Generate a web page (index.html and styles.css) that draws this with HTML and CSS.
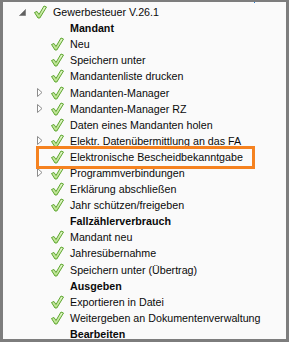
FILE: index.html
```html
<!DOCTYPE html>
<html>
<head lang="de">
    <meta charset="UTF-8">
    <title>Gewerbesteuer</title>
    <link rel="stylesheet" href="styles.css">
</head>
<body>
<svg width="0" height="0" class="defs">
    <defs>
        <linearGradient id="g" x1="0" y1="0" x2="0" y2="1">
            <stop offset="0" stop-color="#e6f7cf"/>
            <stop offset="1" stop-color="#b5df86"/>
        </linearGradient>
        <symbol id="chk" viewBox="0 0 14 14">
            <polygon points="1.5,7.5 4,6.5 6,9.5 11,1 13.5,2 6.8,13 5,13" fill="url(#g)" stroke="#5ca62e" stroke-width="1" stroke-linejoin="round"/>
        </symbol>
        <symbol id="closed" viewBox="0 0 6 9">
            <polygon points="0.5,0.5 5,4.5 0.5,8.5" fill="#fff" stroke="#8c8c8c" stroke-width="1"/>
        </symbol>
        <symbol id="open" viewBox="0 0 7 7">
            <polygon points="6.5,0.5 6.5,6.5 0.5,6.5" fill="#606060" stroke="#888" stroke-width="1"/>
        </symbol>
    </defs>
</svg>
<div id="frame">
    <span class="mark"></span>
    <ul class="tree">
        <li class="row"><span class="exp"><svg class="tri-open"><use href="#open"/></svg></span><span class="chk"><svg><use href="#chk"/></svg></span><span class="label">Gewerbesteuer V.26.1</span></li>
        <li class="row sub"><span class="exp"></span><span class="chk"></span><span class="label head">Mandant</span></li>
        <li class="row sub"><span class="exp"></span><span class="chk"><svg><use href="#chk"/></svg></span><span class="label">Neu</span></li>
        <li class="row sub"><span class="exp"></span><span class="chk"><svg><use href="#chk"/></svg></span><span class="label">Speichern unter</span></li>
        <li class="row sub"><span class="exp"></span><span class="chk"><svg><use href="#chk"/></svg></span><span class="label">Mandantenliste drucken</span></li>
        <li class="row sub"><span class="exp"><svg class="tri"><use href="#closed"/></svg></span><span class="chk"><svg><use href="#chk"/></svg></span><span class="label">Mandanten-Manager</span></li>
        <li class="row sub"><span class="exp"><svg class="tri"><use href="#closed"/></svg></span><span class="chk"><svg><use href="#chk"/></svg></span><span class="label">Mandanten-Manager RZ</span></li>
        <li class="row sub"><span class="exp"></span><span class="chk"><svg><use href="#chk"/></svg></span><span class="label">Daten eines Mandanten holen</span></li>
        <li class="row sub"><span class="exp"><svg class="tri"><use href="#closed"/></svg></span><span class="chk"><svg><use href="#chk"/></svg></span><span class="label">Elektr. Datenübermittlung an das FA</span></li>
        <li class="row sub marked"><span class="exp"></span><span class="chk"><svg><use href="#chk"/></svg></span><span class="label">Elektronische Bescheidbekanntgabe</span></li>
        <li class="row sub"><span class="exp"><svg class="tri"><use href="#closed"/></svg></span><span class="chk"><svg><use href="#chk"/></svg></span><span class="label">Programmverbindungen</span></li>
        <li class="row sub"><span class="exp"></span><span class="chk"><svg><use href="#chk"/></svg></span><span class="label">Erklärung abschließen</span></li>
        <li class="row sub"><span class="exp"></span><span class="chk"><svg><use href="#chk"/></svg></span><span class="label">Jahr schützen/freigeben</span></li>
        <li class="row sub"><span class="exp"></span><span class="chk"></span><span class="label head">Fallzählerverbrauch</span></li>
        <li class="row sub"><span class="exp"></span><span class="chk"><svg><use href="#chk"/></svg></span><span class="label">Mandant neu</span></li>
        <li class="row sub"><span class="exp"></span><span class="chk"><svg><use href="#chk"/></svg></span><span class="label">Jahresübernahme</span></li>
        <li class="row sub"><span class="exp"></span><span class="chk"><svg><use href="#chk"/></svg></span><span class="label">Speichern unter (Übertrag)</span></li>
        <li class="row sub"><span class="exp"></span><span class="chk"></span><span class="label head">Ausgeben</span></li>
        <li class="row sub"><span class="exp"></span><span class="chk"><svg><use href="#chk"/></svg></span><span class="label">Exportieren in Datei</span></li>
        <li class="row sub"><span class="exp"></span><span class="chk"><svg><use href="#chk"/></svg></span><span class="label">Weitergeben an Dokumentenverwaltung</span></li>
        <li class="row sub"><span class="exp"></span><span class="chk"></span><span class="label head">Bearbeiten</span></li>
    </ul>
</div>
</body>
</html>
```

FILE: styles.css
```css
*{
    margin: 0;
    padding: 0;
}
ul{
    list-style: none;
}
body{
    background: #fafafa;
}
.defs{
    position: absolute;
}
#frame{
    position: relative;
    width: 289px;
    height: 342px;
    box-sizing: border-box;
    border: 3px solid #7d7d7d;
    border-top-width: 2px;
    background: #fafafa;
    overflow: hidden;
    font-family: "Liberation Sans", Arial, sans-serif;
    font-size: 10.7px;
    color: #0a0a0a;
}
.mark{
    position: absolute;
    left: 251px;
    top: -2px;
    width: 1px;
    height: 3px;
    background: #2a7fd4;
}
.tree{
    padding-top: 2px;
}
.row{
    display: flex;
    align-items: center;
    height: 16.1px;
    padding-left: 12px;
    white-space: nowrap;
}
.row.sub{
    padding-left: 29px;
}
.exp{
    width: 17px;
    height: 16px;
    display: flex;
    align-items: center;
    flex-shrink: 0;
}
.exp .tri{
    width: 6px;
    height: 9px;
    margin-left: 5px;
}
.exp .tri-open{
    width: 7px;
    height: 7px;
    margin-left: 4px;
    margin-top: 1px;
}
.chk{
    width: 17px;
    height: 16px;
    display: flex;
    align-items: center;
    flex-shrink: 0;
}
.chk svg{
    width: 14px;
    height: 14px;
    margin-left: 1px;
}
.label{
    padding-left: 4px;
    line-height: 16px;
}
.label.head{
    font-weight: bold;
}
.marked{
    position: relative;
}
.marked::after{
    content: "";
    position: absolute;
    left: 33px;
    top: -3px;
    width: 213px;
    height: 17px;
    border: 3px solid #f58220;
}
```
